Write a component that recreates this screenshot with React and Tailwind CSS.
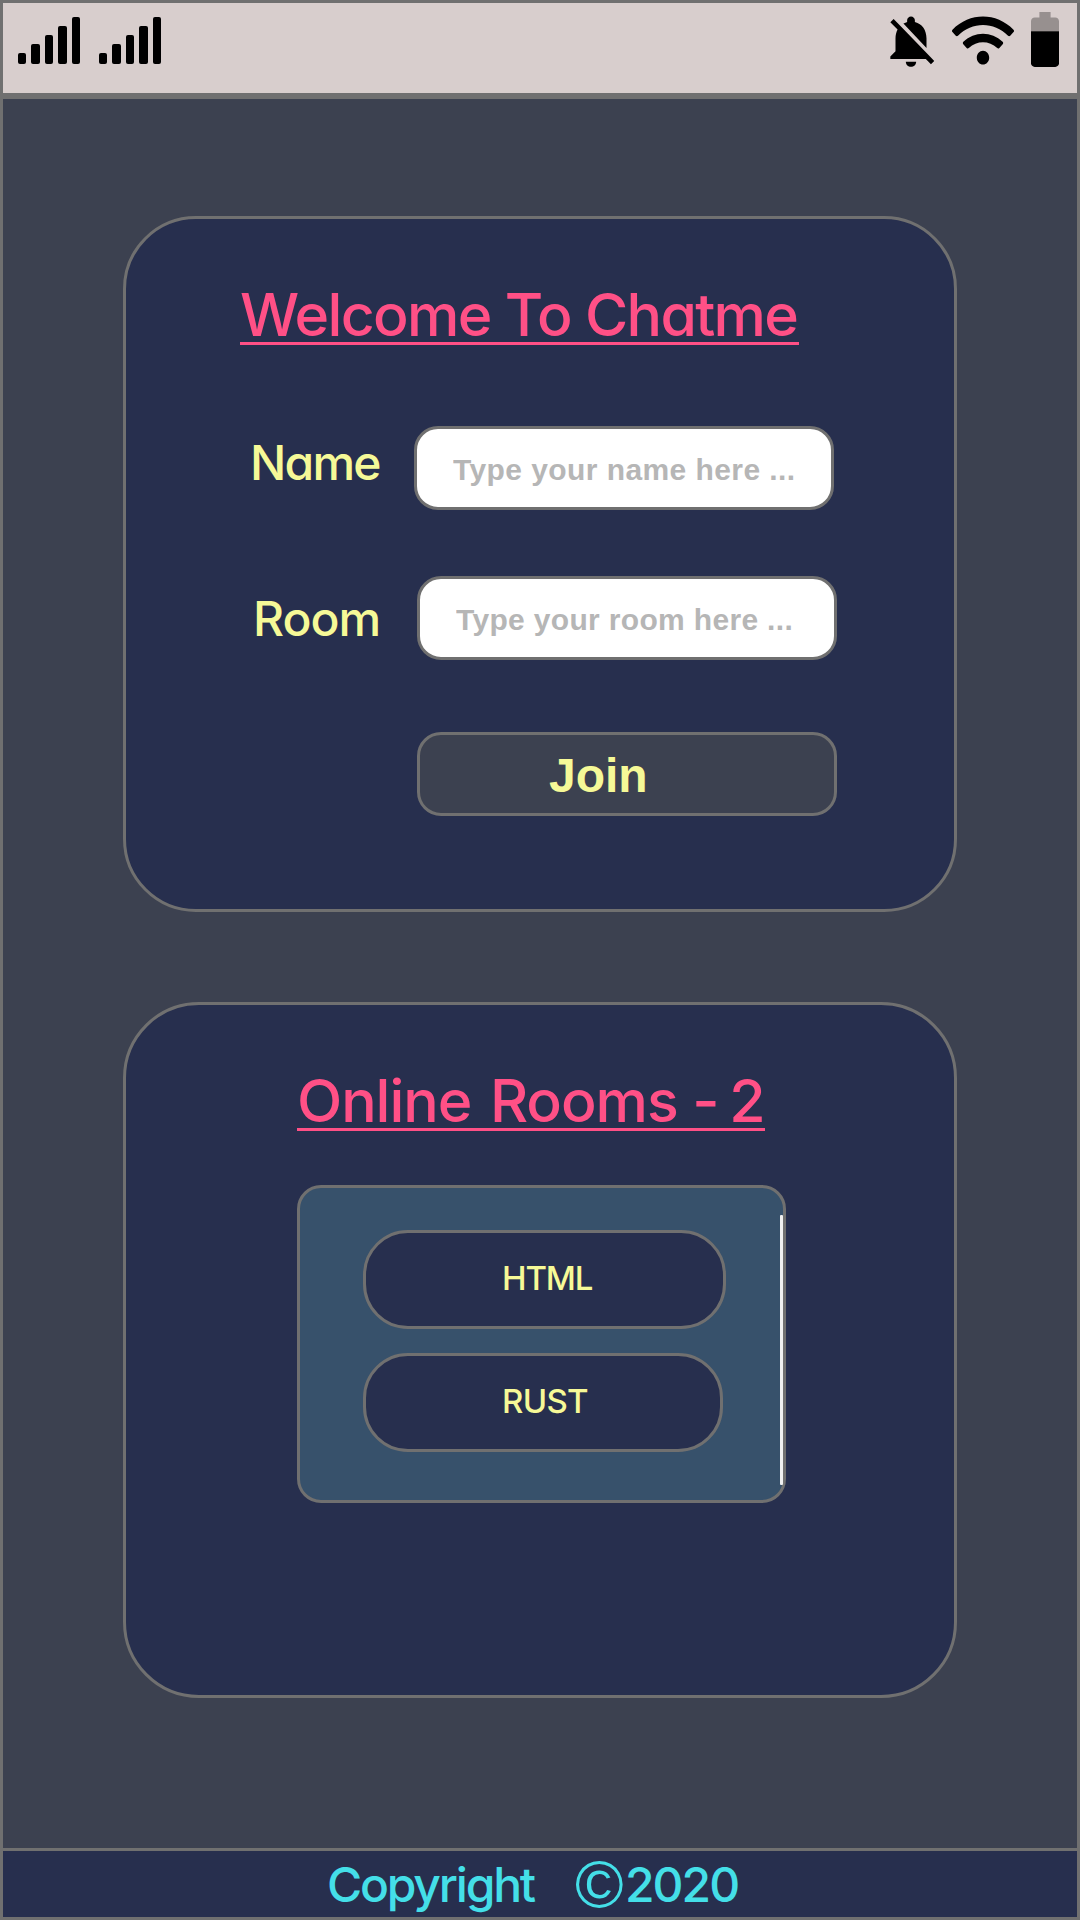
const rooms = [
  { name: "HTML", box: "w-[363px]", text: "tracking-[-1.15px]" },
  { name: "RUST", box: "w-[360px]", text: "tracking-[-0.7px]" },
];

const signalHeights = [11.5, 20.5, 29.5, 38.5, 47.5];

function Signal() {
  return (
    <div className="flex h-12 w-[62px] items-end justify-between">
      {signalHeights.map((h) => (
        <span key={h} className="w-[8.4px] rounded-[2px] bg-black" style={{ height: h }} />
      ))}
    </div>
  );
}

function BellOffIcon() {
  return (
    <svg viewBox="0 0 24 24" preserveAspectRatio="none" className="mt-[7px] h-[62px] w-[62px]" fill="black">
      <path d="M20 18.69L7.84 6.14 5.27 3.49 4 4.76l2.8 2.8v.01c-.52.99-.8 2.16-.8 3.42v5l-2 2v1h13.73l2 2L21 19.72l-1-1.03zM12 22c1.11 0 2-.89 2-2h-4c0 1.11.89 2 2 2zm6-7.32V11c0-3.08-1.64-5.64-4.5-6.32V4c0-.83-.67-1.5-1.5-1.5s-1.5.67-1.5 1.5v.68c-.15.03-.29.08-.42.12-.1.03-.2.07-.3.11h-.01c-.01 0-.01 0-.02.01-.23.09-.46.2-.68.31 0 0-.01 0-.01.01L18 14.68z" />
    </svg>
  );
}

function WifiIcon() {
  return (
    <svg viewBox="0 0 640 512" preserveAspectRatio="none" className="ml-[10px] mt-[10px] h-[55px] w-[62px]" fill="black">
      <path d="M634.91 154.88C457.74-8.99 182.19-8.93 5.09 154.88c-6.66 6.16-6.79 16.59-.35 22.98l34.24 33.97c6.14 6.1 16.02 6.23 22.4.38 145.92-133.68 371.3-133.71 517.25 0 6.38 5.85 16.26 5.71 22.4-.38l34.24-33.97c6.43-6.39 6.3-16.82-.36-22.98zM320 352c-35.35 0-64 28.65-64 64s28.65 64 64 64 64-28.65 64-64-28.65-64-64-64zm202.67-83.59c-115.26-101.93-290.21-101.82-405.34 0-6.9 6.1-7.12 16.69-.57 23.15l34.44 33.99c6 5.92 15.66 6.32 22.05.8 83.95-72.57 209.74-72.41 293.49 0 6.39 5.52 16.05 5.13 22.05-.8l34.44-33.99c6.56-6.46 6.33-17.06-.56-23.15z" />
    </svg>
  );
}

function BatteryIcon() {
  return (
    <svg viewBox="7 2 10 20" preserveAspectRatio="none" className="ml-[17px] mt-[9px] h-[55px] w-7" fill="black">
      <path fillOpacity=".3" d="M17 5.33C17 4.6 16.4 4 15.67 4H14V2h-4v2H8.33C7.6 4 7 4.6 7 5.33V9h10V5.33z" />
      <path d="M7 9v11.67C7 21.4 7.6 22 8.33 22h7.33c.74 0 1.34-.6 1.34-1.33V9H7z" />
    </svg>
  );
}

export default function App() {
  return (
    <div className="flex h-[1920px] w-[1080px] flex-col border-[3px] border-[#707070] bg-[#3c4150] font-['Inter',sans-serif] font-medium [font-feature-settings:'cv11']">
      <header className="flex h-24 shrink-0 justify-between border-b-[6px] border-[#707070] bg-[#d8cecd] pl-[15px] pr-[18px]">
        <div className="flex gap-[19px] pt-[13px]">
          <Signal />
          <Signal />
        </div>
        <div className="flex items-start">
          <BellOffIcon />
          <WifiIcon />
          <BatteryIcon />
        </div>
      </header>

      <main className="flex-1 px-[120px] pt-[117px]">
        <section className="h-[696px] rounded-[73px] border-[3px] border-[#707070] bg-[#272f4e] pt-[68px]">
          <h1 className="ml-[114px] w-[559px] whitespace-nowrap border-b-[3px] border-[#ff5086] text-[59px] leading-[55px] tracking-[-1.68px] text-[#ff5086]">
            Welcome To Chatme
          </h1>
          <div className="mt-[81px] flex items-start pl-[124px]">
            <label htmlFor="name" className="w-[164px] text-[48px] leading-[73px] tracking-[-1.8px] text-[#f6f997]">Name</label>
            <input id="name" placeholder="Type your name here ..." className="h-[84px] w-[420px] rounded-3xl border-[3px] border-[#707070] bg-white pl-9 pt-[4px] font-['Liberation_Sans',sans-serif] text-[30px] font-bold tracking-[0.42px] placeholder:text-[#b6b6b6]" />
          </div>
          <div className="mt-[66px] flex items-start pl-[127px]">
            <label htmlFor="room" className="w-[164px] text-[48px] leading-[85px] tracking-[-1px] text-[#f6f997]">Room</label>
            <input id="room" placeholder="Type your room here ..." className="h-[84px] w-[420px] rounded-3xl border-[3px] border-[#707070] bg-white pl-9 pt-[4px] font-['Liberation_Sans',sans-serif] text-[30px] font-bold tracking-[0.33px] placeholder:text-[#b6b6b6]" />
          </div>
          <button className="ml-[291px] mt-[71px] block h-[84px] w-[420px] rounded-3xl border-[3px] border-[#707070] bg-[#3c4150] pl-[129px] pt-[3px] text-left font-['Liberation_Sans',sans-serif] text-[48px] font-bold leading-[75px] text-[#f6f997]">
            Join
          </button>
        </section>

        <section className="mt-[90px] h-[696px] rounded-[76px] border-[3px] border-[#707070] bg-[#272f4e] pt-[68px]">
          <h2 className="ml-[171px] w-[468px] whitespace-nowrap border-b-[3px] border-[#ff5086] text-[59px] leading-[55px] tracking-[-1.05px] text-[#ff5086]">
            <span className="[word-spacing:4px]">Online </span>
            Rooms{" "}
            <span className="[word-spacing:-4px]">- 2</span>
          </h2>
          <div className="ml-[171px] mt-[54px] flex h-[318px] w-[489px] justify-between rounded-3xl border-[3px] border-[#707070] bg-[#37516b]">
            <ul className="flex flex-col gap-6 pl-[63px] pt-[42px]">
              {rooms.map((room) => (
                <li key={room.name} className={`h-[99px] rounded-[45px] border-[3px] border-[#707070] bg-[#272f4e] pl-[136px] text-[33px] leading-[90px] text-[#f6f997] ${room.box} ${room.text}`}>
                  {room.name}
                </li>
              ))}
            </ul>
            <div className="mt-[27px] h-[270px] w-[3px] rounded-[1px] bg-[#f0f0f0]" />
          </div>
        </section>
      </main>

      <footer className="flex h-[69px] shrink-0 items-center whitespace-nowrap border-t-[3px] border-[#707070] bg-[#272f4e] pl-[324px] text-[48px] leading-[67px] text-[#44dfe8]">
        <span className="w-[248px] tracking-[-2.2px]">Copyright</span>
        <span className="w-[50px] font-['Liberation_Sans',sans-serif] text-[66px] font-normal">©</span>
        <span className="tracking-[-2px]">2020</span>
      </footer>
    </div>
  );
}
